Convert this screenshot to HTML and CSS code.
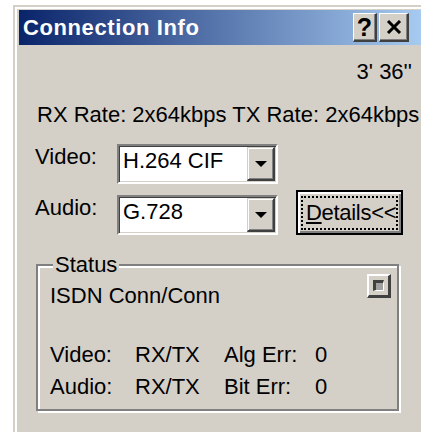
FILE: index.html
```html
<!DOCTYPE html>
<html lang="en">
<head>
<meta charset="utf-8">
<title>Connection Info</title>
<link rel="stylesheet" href="styles.css">
</head>
<body>
<div class="window">
  <div class="titlebar">
    <span class="title">Connection Info</span>
    <div class="caption-buttons">
      <span class="cap-btn cap-help">?</span>
      <span class="cap-btn cap-close">
        <svg width="16" height="14" viewBox="0 0 16 14"><path d="M2 1 L14 13 M14 1 L2 13" stroke="#000" stroke-width="3" fill="none"/></svg>
      </span>
    </div>
  </div>

  <div class="content">
    <div class="elapsed">3' 36''</div>
    <div class="rates">RX Rate: 2x64kbps TX Rate: 2x64kbps</div>

    <div class="field-row">
      <span class="field-label">Video:</span>
      <div class="combo">
        <span class="combo-value">H.264 CIF</span>
        <span class="combo-arrow"><svg width="12" height="6" viewBox="0 0 12 6"><path d="M0 0 H12 L6 6 Z" fill="#000"/></svg></span>
      </div>
    </div>

    <div class="field-row field-row-audio">
      <span class="field-label">Audio:</span>
      <div class="combo">
        <span class="combo-value">G.728</span>
        <span class="combo-arrow"><svg width="12" height="6" viewBox="0 0 12 6"><path d="M0 0 H12 L6 6 Z" fill="#000"/></svg></span>
      </div>
      <button class="details-btn" type="button"><span class="focus-ring"><u>D</u>etails&lt;&lt;</span></button>
    </div>

    <div class="group">
      <div class="group-title">Status</div>
      <div class="status-head">
        <span>ISDN Conn/Conn</span>
        <span class="mini-btn"><span class="mini-mark"></span></span>
      </div>
      <div class="status-grid">
        <span>Video:</span><span>RX/TX</span><span>Alg Err:</span><span>0</span>
        <span>Audio:</span><span>RX/TX</span><span>Bit Err:</span><span>0</span>
      </div>
    </div>
  </div>
</div>
</body>
</html>
```

FILE: styles.css
```css
html, body {
  margin: 0;
  padding: 0;
  overflow: hidden;
  background: #ffffff;
}

body {
  font-family: "Liberation Sans", Arial, sans-serif;
  font-size: 22px;
  line-height: 26px;
  color: #000;
}

/* dialog frame */
.window {
  margin: 5px 0 0 13px;
  width: 402px;
  height: 440px;
  padding: 3px 2px 0 4px;
  background: #d4d0c8;
  border-style: solid;
  border-width: 2px;
  border-color: #d4d0c8 #404040 #404040 #d4d0c8;
  box-shadow: inset 2px 2px #ffffff, inset -2px -2px #808080;
}

/* caption */
.titlebar {
  height: 35px;
  display: flex;
  align-items: center;
  justify-content: space-between;
  background: linear-gradient(to right, #0a246a, #a6caf0);
}

.title {
  padding-left: 4px;
  color: #fff;
  font-weight: bold;
  font-size: 22px;
  letter-spacing: 0.6px;
}

.caption-buttons {
  display: flex;
  gap: 2px;
  padding-right: 12px;
}

.cap-btn {
  height: 29px;
  box-sizing: border-box;
  display: flex;
  align-items: center;
  justify-content: center;
  background: #d4d0c8;
  border-style: solid;
  border-width: 1px 2px 2px 1px;
  border-color: #ffffff #404040 #404040 #ffffff;
  box-shadow: inset -1px -1px #808080;
}

.cap-help {
  width: 24px;
  font-weight: bold;
  font-size: 25px;
  line-height: 25px;
}

.cap-close {
  width: 30px;
}

/* body */
.elapsed {
  margin-top: 14px;
  padding-right: 9px;
  text-align: right;
}

.rates {
  margin-top: 17px;
  padding-left: 18px;
  white-space: nowrap;
}

.field-row {
  display: flex;
  align-items: flex-start;
  margin-top: 16px;
  padding-left: 16px;
}

.field-label {
  width: 82px;
}

.combo {
  width: 161px;
  height: 40px;
  box-sizing: border-box;
  display: flex;
  background: #fff;
  border-style: solid;
  border-width: 2px;
  border-color: #808080 #ffffff #ffffff #808080;
  box-shadow: inset 1px 1px #404040, inset -1px -1px #d4d0c8;
  padding: 1px;
}

.combo-value {
  flex: 1;
  padding: 1px 0 0 3px;
}

.combo-arrow {
  width: 28px;
  box-sizing: border-box;
  display: flex;
  align-items: center;
  justify-content: center;
  background: #d4d0c8;
  border-style: solid;
  border-width: 1px 2px 2px 1px;
  border-color: #d4d0c8 #404040 #404040 #d4d0c8;
  box-shadow: inset 1px 1px #ffffff, inset -1px -1px #808080;
}

.field-row-audio {
  margin-top: 6px;
}

.field-row-audio .field-label,
.field-row-audio .combo {
  margin-top: 5px;
}

.details-btn {
  margin-left: 18px;
  width: 107px;
  height: 45px;
  padding: 4px 4px 3px 3px;
  box-sizing: border-box;
  display: flex;
  background: #d4d0c8;
  border: 2px solid #000;
  box-shadow: inset 2px 2px #ffffff, inset -2px -2px #808080;
  font: inherit;
  color: #000;
}

/* dotted focus rectangle inside the default button */
.focus-ring {
  flex: 1;
  display: flex;
  align-items: center;
  padding-left: 3px;
  border: 2px dotted #000;
  white-space: nowrap;
  letter-spacing: -0.3px;
}

/* Status group box */
.group {
  margin: 29px 0 0 17px;
  width: 363px;
  box-sizing: border-box;
  padding: 0 6px 9px 12px;
  border: 2px solid #808080;
  box-shadow: inset 2px 2px #ffffff, 2px 2px #ffffff;
}

.group-title {
  width: fit-content;
  margin: -14px 0 0 3px;
  padding: 0 2px;
  background: #d4d0c8;
}

.status-head {
  display: flex;
  justify-content: space-between;
  align-items: flex-start;
  margin-top: 5px;
}

.mini-btn {
  width: 24px;
  height: 24px;
  margin-top: -9px;
  box-sizing: border-box;
  display: flex;
  align-items: center;
  justify-content: center;
  background: #d4d0c8;
  border-style: solid;
  border-width: 2px 3px 3px 2px;
  border-color: #ffffff #404040 #404040 #ffffff;
}

.mini-mark {
  width: 11px;
  height: 11px;
  box-sizing: border-box;
  border-style: solid;
  border-width: 3px 1px 1px 3px;
  border-color: #404040 #ffffff #ffffff #404040;
  background: #a0a0a0;
}

.status-grid {
  display: grid;
  grid-template-columns: 85px 89px 91px auto;
  row-gap: 6px;
  margin-top: 33px;
}
```
